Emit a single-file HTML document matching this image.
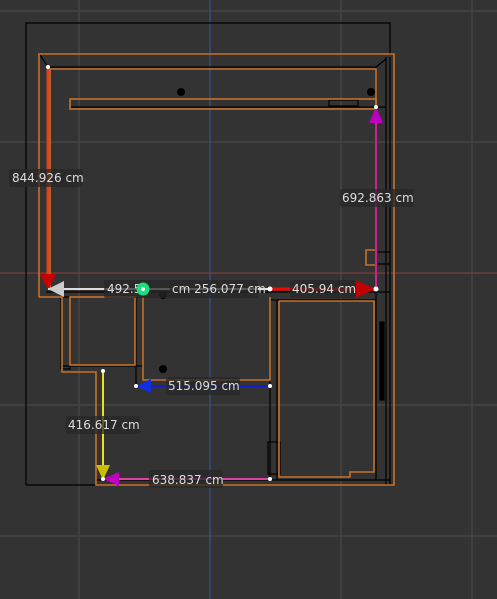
<!DOCTYPE html>
<html><head><meta charset="utf-8"><style>
html,body{margin:0;padding:0;background:#333;}
svg{display:block}
text{font-family:"DejaVu Sans","Liberation Sans",sans-serif;font-size:12px;fill:#ddd}
</style></head><body>
<svg width="497" height="599" viewBox="0 0 497 599" xmlns="http://www.w3.org/2000/svg">
<rect width="497" height="599" fill="#333"/>
<g stroke="#444" stroke-width="1.5">
<line x1="79" y1="0" x2="79" y2="599"/><line x1="341" y1="0" x2="341" y2="599"/><line x1="472" y1="0" x2="472" y2="599"/>
<line x1="0" y1="11" x2="497" y2="11"/><line x1="0" y1="142" x2="497" y2="142"/><line x1="0" y1="405" x2="497" y2="405"/><line x1="0" y1="536" x2="497" y2="536"/>
</g>
<line x1="210" y1="0" x2="210" y2="599" stroke="#3a56a8" stroke-width="1"/>
<line x1="0" y1="273" x2="497" y2="273" stroke="#8a4040" stroke-width="1"/>
<!-- black outer -->
<g fill="none" stroke="#000" stroke-width="1.2">
<polyline points="26,485 26,23 390,23 390,55"/>
<line x1="26" y1="485" x2="97" y2="485"/>
<line x1="46" y1="67" x2="376" y2="67"/>
<line x1="386" y1="57" x2="386" y2="485"/>
<line x1="390" y1="57" x2="390" y2="485"/>
<line x1="376" y1="67" x2="376" y2="480"/>
<line x1="40" y1="55" x2="48" y2="67"/>
<line x1="376" y1="67" x2="386" y2="59"/>
<line x1="70" y1="107" x2="386" y2="107"/>
<rect x="329" y="100" width="29" height="6"/>
<line x1="46" y1="292" x2="390" y2="292"/>
<rect x="61" y="297" width="9" height="72"/>
<line x1="62" y1="366" x2="143" y2="366"/>
<line x1="136" y1="297" x2="136" y2="386"/>
<line x1="143" y1="297" x2="143" y2="380"/>
<line x1="270" y1="300" x2="270" y2="480"/>
<line x1="277" y1="300" x2="277" y2="480"/>
<line x1="270" y1="300" x2="376" y2="300"/>
<line x1="96" y1="480" x2="390" y2="480"/>
<rect x="380" y="322" width="4" height="78" fill="#000"/>
<rect x="268" y="442" width="12" height="32"/>
<line x1="376" y1="252" x2="390" y2="252"/>
<line x1="376" y1="264" x2="390" y2="264"/>
</g>
<!-- orange walls -->
<g fill="none" stroke="#c7712a" stroke-width="1.6">
<polyline points="39,297 39,54 394,54 394,485 96,485 96,372 62,372 62,297 39,297"/>
<polyline points="50,290 50,69 376,69 376,250 366,250 366,265 376,265 376,290"/>
<rect x="70" y="99" width="306" height="10"/>
<rect x="70" y="297" width="65" height="68"/>
<polyline points="143,297 143,380 270,380 270,297"/>
<polyline points="279,301 374,301 374,472 350,472 350,477 279,477 279,301"/>
</g>
<circle cx="181" cy="92" r="4" fill="#000"/>
<circle cx="371" cy="92" r="4" fill="#000"/>
<circle cx="163" cy="295" r="4" fill="#000"/>
<circle cx="163" cy="369" r="4" fill="#000"/>
<!-- dimensions -->
<line x1="48" y1="67" x2="48" y2="280" stroke="#e0401a" stroke-width="3"/>
<polygon points="40,274 56,274 48,290" fill="#c80000"/>
<line x1="48" y1="289" x2="270" y2="289" stroke="#ddd" stroke-width="2"/>
<polygon points="48,289 64,281 64,297" fill="#ccc"/>
<line x1="270" y1="289" x2="376" y2="289" stroke="#f00" stroke-width="3"/>
<polygon points="376,289 355,280 355,298" fill="#c00000"/>
<line x1="376" y1="107" x2="376" y2="289" stroke="#d02090" stroke-width="2"/>
<polygon points="376,107 369,123 383,123" fill="#c000c0"/>
<line x1="136" y1="386" x2="270" y2="386" stroke="#1020d0" stroke-width="2"/>
<polygon points="136,386 151,379 151,393" fill="#1030e0"/>
<line x1="103" y1="371" x2="103" y2="479" stroke="#e8e020" stroke-width="2"/>
<polygon points="96,465 110,465 103,480" fill="#c8c000"/>
<line x1="103" y1="479" x2="270" y2="479" stroke="#e040a0" stroke-width="2"/>
<polygon points="103,479 119,472 119,486" fill="#c000c0"/>
<g fill="#fff"><circle cx="48" cy="67" r="2"/><circle cx="376" cy="107" r="2"/><circle cx="270" cy="289" r="2.5"/><circle cx="376" cy="289" r="2.5"/><circle cx="136" cy="386" r="2"/><circle cx="270" cy="386" r="2"/><circle cx="103" cy="371" r="2"/><circle cx="103" cy="479" r="2"/><circle cx="270" cy="479" r="2"/></g>
<!-- labels -->
<g fill="rgba(40,40,40,0.75)">
<rect x="9" y="169" width="74" height="18" rx="2"/>
<rect x="104" y="280" width="76" height="18" rx="2"/>
<rect x="170" y="280" width="88" height="18" rx="2"/>
<rect x="290" y="280" width="66" height="18" rx="2"/>
<rect x="340" y="189" width="74" height="18" rx="2"/>
<rect x="166" y="377" width="74" height="18" rx="2"/>
<rect x="66" y="416" width="74" height="18" rx="2"/>
<rect x="149" y="470" width="74" height="18" rx="2"/>
</g>
<text x="12" y="182">844.926 cm</text>
<text x="107" y="293">492.5</text>
<text x="172" y="293">cm 256.077 cm</text>
<text x="292" y="293">405.94 cm</text>
<text x="342" y="202">692.863 cm</text>
<text x="168" y="390">515.095 cm</text>
<text x="68" y="429">416.617 cm</text>
<text x="152" y="484">638.837 cm</text>
<circle cx="143" cy="289" r="6.5" fill="#19e07a"/>
<circle cx="143" cy="289" r="2" fill="#fff"/>
</svg>
</body></html>
